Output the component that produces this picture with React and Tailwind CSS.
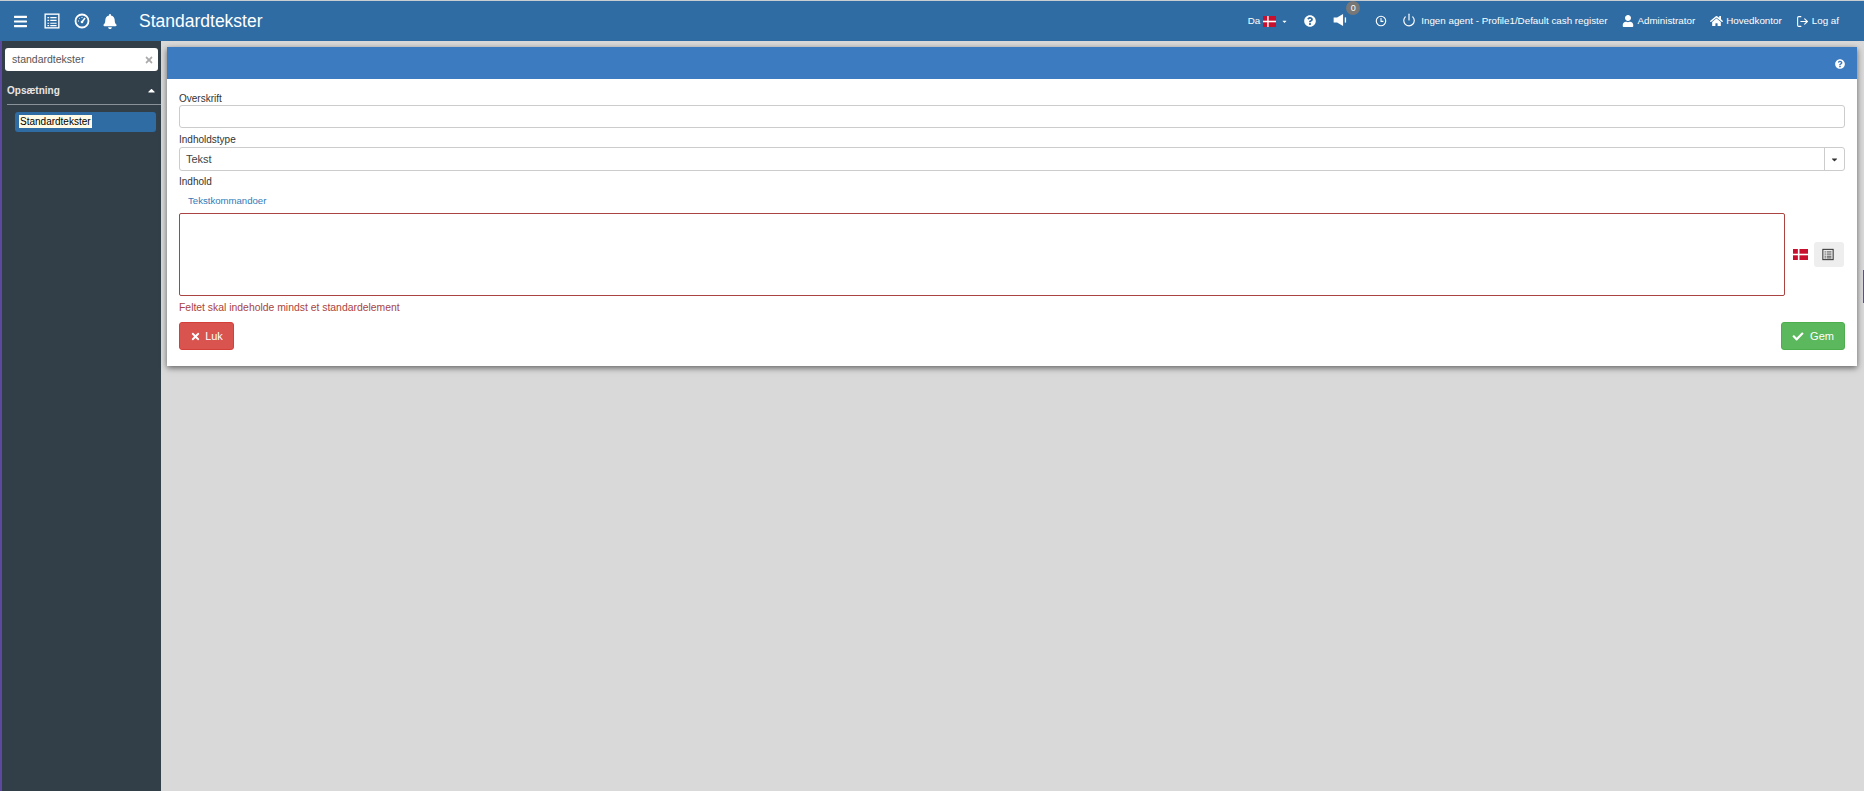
import React from "react";
import { FaBars, FaBell, FaQuestionCircle, FaUser, FaHome, FaTimes, FaCheck, FaCaretDown, FaCaretUp } from "react-icons/fa";
import { LuPower, LuLogOut } from "react-icons/lu";

const Flag = ({ className }) => (
  <svg viewBox="0 0 37 28" className={className} preserveAspectRatio="none">
    <rect width="37" height="28" fill="#c8102e" />
    <rect x="12" width="4" height="28" fill="#fff" />
    <rect y="12" width="37" height="4" fill="#fff" />
  </svg>
);

const ListAlt = ({ className, fg = "#fff" }) => (
  <svg viewBox="0 0 14 14" className={className}>
    <rect x="1" y="1" width="12" height="12" fill="none" stroke={fg} strokeWidth="1.2" />
    <path d="M3 4h1.5M3 6.5h1.5M3 9h1.5M3 11h1.5M5.5 4H11M5.5 6.5H11M5.5 9H11M5.5 11H11" stroke={fg} strokeWidth="1" />
  </svg>
);

const Dashboard = ({ className }) => (
  <svg viewBox="0 0 16 16" className={className} fill="none">
    <circle cx="8" cy="8" r="6.5" stroke="#fff" strokeWidth="1.8" />
    <path d="M8 9 L11 5" stroke="#fff" strokeWidth="1.6" />
    <circle cx="8" cy="9" r="1.3" fill="#fff" />
    <path d="M4 8h1M8 4v1M5.3 5.3l.6.6" stroke="#fff" strokeWidth="1" />
  </svg>
);

const Clock = ({ className }) => (
  <svg viewBox="0 0 16 16" className={className} fill="none">
    <circle cx="8" cy="8" r="6.3" stroke="#fff" strokeWidth="1.5" />
    <path d="M8 4v4.5h3.2" stroke="#fff" strokeWidth="1.4" />
  </svg>
);

const Speaker = ({ className }) => (
  <svg viewBox="0 0 16 14" className={className} fill="#fff">
    <path d="M0 4h4l7-4v14l-7-4H0z" />
    <rect x="13" y="4" width="1.5" height="6" />
  </svg>
);

const Field = ({ children, className = "" }) => (
  <div className={`text-[10px] leading-[14px] text-[#333] ${className}`}>{children}</div>
);

export default function App() {
  return (
    <div className="h-[791px] w-[1864px] overflow-hidden bg-[#d9d9d9] flex flex-col font-['Liberation_Sans',Arial,sans-serif] relative">
      <div className="h-px bg-[#c9ced3] shrink-0" />
      <header className="h-[40px] shrink-0 bg-[#2f6ca3] flex items-center text-white pl-[14px] pr-[25px]">
        <FaBars className="w-[13px] h-[15px] mr-[17px]" />
        <ListAlt className="w-[16px] h-[16px] mr-[14px]" />
        <Dashboard className="w-[16px] h-[16px] mr-[13px]" />
        <FaBell className="w-[14px] h-[15px] mr-[22px]" />
        <span className="text-[17.5px] leading-[22px]">Standardtekster</span>
        <div className="ml-auto flex items-center text-[9.8px] leading-[14px]">
          <span className="mr-[3px]">Da</span>
          <Flag className="w-[13px] h-[11px] mr-[5px]" />
          <FaCaretDown className="w-[7px] h-[7px] mr-[16px]" />
          <FaQuestionCircle className="w-[12px] h-[12px] mr-[17px]" />
          <div className="relative mr-[27px] -mt-[3px]">
            <Speaker className="w-[15px] h-[12px]" />
            <span className="absolute left-[13px] -top-[13px] w-[14px] h-[14px] rounded-full bg-[#777] text-[9px] leading-[14px] text-center">0</span>
          </div>
          <Clock className="w-[12px] h-[12px] mr-[15px]" />
          <LuPower className="w-[14px] h-[14px] mr-[5px] -mt-[3px]" />
          <span className="mr-[15px]">Ingen agent - Profile1/Default cash register</span>
          <FaUser className="w-[12px] h-[12px] mr-[3px]" />
          <span className="mr-[15px]">Administrator</span>
          <FaHome className="w-[13px] h-[12px] mr-[3px]" />
          <span className="mr-[14px]">Hovedkontor</span>
          <LuLogOut className="w-[13px] h-[13px] mr-[3px]" />
          <span>Log af</span>
        </div>
      </header>
      <div className="flex flex-1 min-h-0">
        <aside className="w-[161px] shrink-0 bg-[#333f48] border-l-2 border-[#5b4a9e] pt-[7px] flex flex-col">
          <div className="mx-[3px] h-[23px] bg-white rounded-[3px] flex items-center pl-[7px] pr-[4px] text-[10.5px] text-[#555]">
            <span className="flex-1">standardtekster</span>
            <FaTimes className="w-[10px] h-[10px] text-[#aaa]" />
          </div>
          <div className="mt-[12px] ml-[5px] mr-[4px] flex items-center justify-between text-[10px] font-bold text-[#e6e6e6] h-[14px]">
            <span>Opsætning</span>
            <FaCaretUp className="w-[11px] h-[11px] text-white" />
          </div>
          <div className="h-px bg-[#8a9299] ml-[5px] mt-[7px]" />
          <div className="mt-[7px] ml-[13px] mr-[5px] h-[20px] rounded-[3px] bg-[#2f6ca3] flex items-center pl-[4px] pb-[1px]">
            <span className="bg-[#fffbe6] text-[10px] leading-[13px] text-black px-[1px]">Standardtekster</span>
          </div>
        </aside>
        <main className="flex-1 min-w-0 pl-[6px] pr-[7px] pt-[6px]">
          <section className="bg-white shadow-[0_2px_6px_rgba(0,0,0,0.55)]">
            <div className="h-[32px] bg-[#3d7bc1] flex items-center justify-end pr-[12px] pt-[1px]">
              <FaQuestionCircle className="w-[10px] h-[10px] text-white" />
            </div>
            <div className="pl-[12px] pr-[12px] pt-[13px] pb-[16px]">
              <Field className="h-[13px]">Overskrift</Field>
              <div className="h-[23px] rounded-[3px] border border-[#ccc] bg-white" />
              <Field className="mt-[5px] h-[14px]">Indholdstype</Field>
              <div className="h-[24px] rounded-[3px] border border-[#ccc] bg-white flex items-stretch text-[11px] text-[#444]">
                <div className="flex-1 flex items-center pl-[6px]">Tekst</div>
                <div className="w-[20px] border-l border-[#ccc] flex items-center justify-center">
                  <FaCaretDown className="w-[9px] h-[9px] text-[#333]" />
                </div>
              </div>
              <Field className="mt-[4px] h-[15px]">Indhold</Field>
              <div className="mt-[4px] h-[14px] pl-[9px] text-[9.6px] leading-[14px] text-[#337ab7]">Tekstkommandoer</div>
              <div className="mt-[5px] flex items-center">
                <div className="h-[83px] w-[1606px] shrink-0 rounded-[2px] border border-[#a94442] bg-white" />
                <Flag className="w-[15px] h-[11px] ml-[8px]" />
                <div className="ml-[6px] w-[30px] h-[25px] rounded-[3px] bg-[#eeeeee] flex items-center justify-center pr-[2px]">
                  <ListAlt className="w-[12px] h-[13px]" fg="#333" />
                </div>
              </div>
              <div className="mt-[5px] text-[10.4px] leading-[14px] text-[#a94442]">Feltet skal indeholde mindst et standardelement</div>
              <div className="mt-[7px] flex items-center justify-between">
                <button className="h-[28px] w-[55px] rounded-[3px] bg-[#d9534f] border border-[#d43f3a] text-white text-[11px] flex items-center justify-center gap-[4px]">
                  <FaTimes className="w-[11px] h-[11px]" />Luk
                </button>
                <button className="h-[28px] w-[64px] rounded-[3px] bg-[#5cb85c] border border-[#4cae4c] text-white text-[11px] flex items-center justify-center gap-[6px]">
                  <FaCheck className="w-[12px] h-[11px]" />Gem
                </button>
              </div>
            </div>
          </section>
        </main>
      </div>
      <div className="absolute right-0 top-[270px] w-px h-[33px] bg-[#5b4a9e]" />
    </div>
  );
}
